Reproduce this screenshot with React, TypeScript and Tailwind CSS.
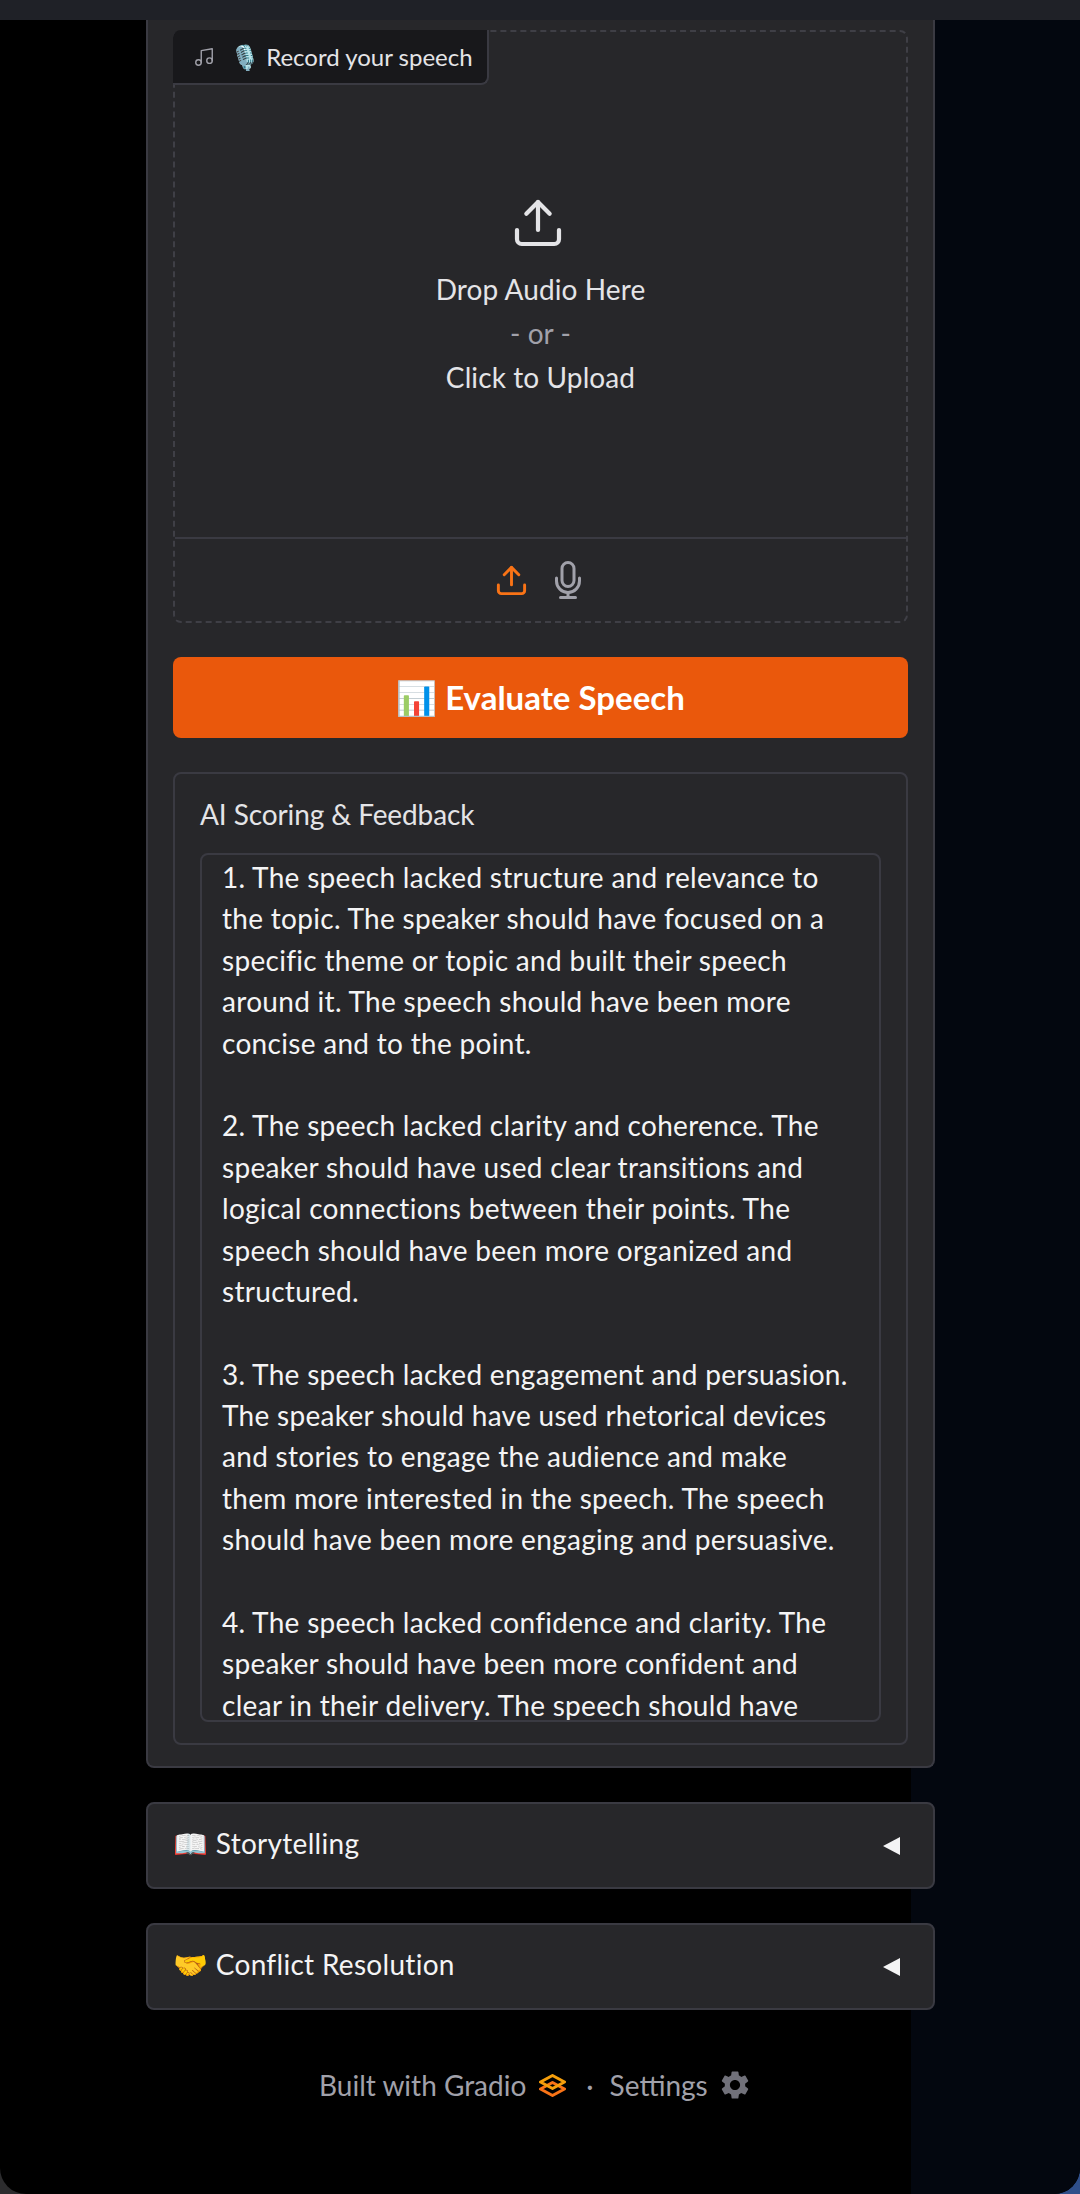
import { Music, Upload } from 'lucide-react';
import { MdSettings } from 'react-icons/md';

// Text as it wraps in the reference, blank strings are the gaps between the points
const feedbackLines = [
    '1. The speech lacked structure and relevance to',
    'the topic. The speaker should have focused on a',
    'specific theme or topic and built their speech',
    'around it. The speech should have been more',
    'concise and to the point.',
    '',
    '2. The speech lacked clarity and coherence. The',
    'speaker should have used clear transitions and',
    'logical connections between their points. The',
    'speech should have been more organized and',
    'structured.',
    '',
    '3. The speech lacked engagement and persuasion.',
    'The speaker should have used rhetorical devices',
    'and stories to engage the audience and make',
    'them more interested in the speech. The speech',
    'should have been more engaging and persuasive.',
    '',
    '4. The speech lacked confidence and clarity. The',
    'speaker should have been more confident and',
    'clear in their delivery. The speech should have',
];

const Accordion = ({ label }: { label: string }) => (
    <div className="flex h-[87px] items-center justify-between rounded-lg border-2 border-[#3a3a42] bg-[#27272a] pl-[25px] pr-[33px]">
        <span className="pb-[5px] text-[28px] tracking-[0.3px] text-[#f4f4f5]">{label}</span>
        <svg width="17" height="18" viewBox="0 0 17 18"><polygon points="17,0 17,18 0,9" fill="#f4f4f5" /></svg>
    </div>
);

const GradioLogo = () => (
    <svg width="27" height="23" viewBox="0 0 27 23" fill="none" strokeWidth="3" strokeLinejoin="round">
        <path d="M13.5 8.5 L25.5 15 L13.5 21.5 L1.5 15 Z" stroke="#f97316" />
        <path d="M13.5 1.5 L25.5 8 L13.5 14.5 L1.5 8 Z" stroke="#f59e0b" />
    </svg>
);

const MicIcon = () => (
    <svg width="26" height="38" viewBox="0 0 26 38" fill="none" stroke="#a1a1aa" strokeWidth="3" strokeLinecap="round">
        <rect x="7" y="1.5" width="12" height="24" rx="6" />
        <path d="M1.5 17 v3 a11.5 11.5 0 0 0 23 0 v-3" />
        <path d="M13 32 v4" />
        <path d="M5.5 36.5 h15" />
    </svg>
);

export default function App() {
    return (
        <div className="h-[2194px] w-[1080px] bg-[linear-gradient(90deg,#2c2c2e_50%,#2f4f8a_50%)]">
            <div className="relative h-full overflow-hidden rounded-b-[26px] bg-black font-['Lato',sans-serif]">
                <div className="absolute inset-y-0 right-0 w-[169px] bg-[#03070f]" />
                <div className="relative">
                    <div className="h-5 bg-[#1f2127]" />
                    <div className="ml-[146px] w-[789px]">
                        <div className="rounded-b-lg border-x-2 border-b-2 border-[#3a3a42] bg-[#27272a] px-[25px] pb-[21px] pt-[10px]">
                            <div className="relative h-[593px] rounded-lg border-2 border-dashed border-[#3f3f46]">
                                <div className="absolute -left-[2px] -top-[2px] flex h-[55px] w-[316px] items-center gap-[15px] rounded-tl-lg rounded-br-lg border-b-2 border-r-2 border-[#3a3a42] bg-[#18181b] pl-5 text-[24px] text-[#e4e4e7]">
                                    <Music size={22} strokeWidth={1.5} className="text-[#a1a1aa]" />
                                    <span>🎙️ Record your speech</span>
                                </div>
                                <div className="flex h-[507px] flex-col items-center border-b-2 border-[#3a3a42] pt-[163px] text-[28px] leading-[44px] tracking-[0.1px] text-[#e4e4e7]">
                                    <Upload size={56} strokeWidth={1.8} className="mb-[16px] mr-[6px]" />
                                    <span>Drop Audio Here</span>
                                    <span className="text-[#a1a1aa]">- or -</span>
                                    <span>Click to Upload</span>
                                </div>
                                <div className="flex h-[82px] items-center justify-center gap-[26px] pr-[7px]">
                                    <Upload size={35} strokeWidth={2} className="text-[#f97316]" />
                                    <MicIcon />
                                </div>
                            </div>
                            <button className="mt-[34px] flex h-[81px] w-full items-center justify-center rounded-lg bg-[#ea580c] text-[33px] font-bold text-white">
                                📊 Evaluate Speech
                            </button>
                            <div className="mt-[34px] h-[973px] rounded-lg border-2 border-[#3a3a42] px-[25px] pt-[19px]">
                                <div className="text-[28px] leading-[42px] tracking-[-0.1px] text-[#e4e4e7]">AI Scoring &amp; Feedback</div>
                                <div className="mt-[18px] h-[869px] overflow-hidden rounded-lg border-2 border-[#3a3a42] px-[20px] pt-[2px] text-[28px] leading-[41.4px] tracking-[0.3px] text-[#f4f4f5]">
                                    {feedbackLines.map((line, i) => (
                                        <div key={i} className="h-[41.4px] whitespace-nowrap">{line}</div>
                                    ))}
                                </div>
                            </div>
                        </div>
                        <div className="mt-[34px] flex flex-col gap-[34px]">
                            <Accordion label="📖 Storytelling" />
                            <Accordion label="🤝 Conflict Resolution" />
                        </div>
                    </div>
                    <div className="mt-[55px] flex items-center pl-[319px] text-[28px] leading-10 text-[#a1a1aa]">
                        <span>Built with Gradio</span>
                        <span className="ml-[13px]"><GradioLogo /></span>
                        <span className="ml-[20px] mr-[16px]">·</span>
                        <span>Settings</span>
                        <MdSettings size={34} className="ml-[10px] text-[#71717a]" />
                    </div>
                </div>
            </div>
        </div>
    );
}
